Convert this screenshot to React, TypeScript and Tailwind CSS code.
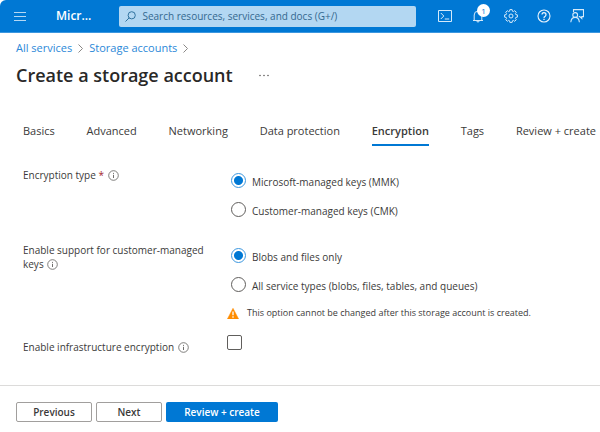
import React from "react";

const tabs = [
  "Basics",
  "Advanced",
  "Networking",
  "Data protection",
  "Encryption",
  "Tags",
  "Review + create",
];

function InfoIcon() {
  return (
    <svg
      className="ml-px inline-block size-[11px] align-[-2px]"
      viewBox="0 0 11 11"
      fill="none"
      stroke="#605e5c"
      aria-hidden="true"
    >
      <circle cx="5.5" cy="5.5" r="4.8" strokeWidth="0.8" />
      <path d="M5.5 4.8v3.2M5.5 2.9v1" strokeWidth="0.9" />
    </svg>
  );
}

function Chevron() {
  return (
    <svg
      className="h-[9px] w-[5px]"
      viewBox="0 0 5 9"
      fill="none"
      stroke="#8a8886"
      aria-hidden="true"
    >
      <path d="M0.5 0.5l4 4-4 4" />
    </svg>
  );
}

interface RadioProps {
  name: string;
  label: string;
  checked: boolean;
  onSelect: () => void;
}

function Radio({ name, label, checked, onSelect }: RadioProps) {
  return (
    <label className="flex h-[15px] items-center gap-[6px]">
      <input
        type="radio"
        name={name}
        checked={checked}
        onChange={onSelect}
        className="size-[15px] shrink-0 appearance-none rounded-full border border-[#605e5c] bg-white checked:border-[#3c97df] checked:bg-[radial-gradient(circle,#0078d4_4px,white_5px)]"
      />
      <span className="pt-[3px]">{label}</span>
    </label>
  );
}

function TopBar() {
  return (
    <header className="flex h-[33px] items-center rounded-tl-md border-b border-[#3c97df] bg-[#0078d4] pr-4 pl-[14px] text-white">
      <button aria-label="Show portal menu">
        <svg
          className="h-[9px] w-3"
          viewBox="0 0 12 9"
          stroke="#b5d8f4"
          aria-hidden="true"
        >
          <path d="M0 0.5h12M0 4.5h12M0 8.5h12" />
        </svg>
      </button>
      <a href="#" className="ml-[30px] text-xs font-semibold">
        Micr...
      </a>
      <div className="ml-7 flex h-[21px] flex-1 items-center gap-[6px] rounded-[2px] bg-[#b3d7f2] pl-[6px]">
        <svg
          className="size-[11px] shrink-0"
          viewBox="0 0 11 11"
          fill="none"
          stroke="#31739f"
          aria-hidden="true"
        >
          <circle cx="6.7" cy="4.3" r="3.6" />
          <path d="M4.2 6.8L0.5 10.5" />
        </svg>
        <input
          type="text"
          aria-label="Search"
          placeholder="Search resources, services, and docs (G+/)"
          className="min-w-0 flex-1 bg-transparent text-[10px] outline-none placeholder:text-[#34688f]"
        />
      </div>
      <div className="ml-[22px] flex items-center gap-[19px]">
        <button aria-label="Cloud Shell">
          <svg
            className="size-[14px]"
            viewBox="0 0 14 14"
            fill="none"
            stroke="#d5eafa"
            aria-hidden="true"
          >
            <path d="M0.5 1.5h13v11h-13zM2.8 4l3 3-3 3M6.8 10h4.4" />
          </svg>
        </button>
        <button aria-label="Notifications" className="relative">
          <svg
            className="size-[14px]"
            viewBox="0 0 14 14"
            fill="none"
            stroke="#d5eafa"
            aria-hidden="true"
          >
            <path d="M2 11.5h10M3.2 11.5V6a3.8 3.8 0 0 1 7.6 0v5.5M5.7 11.7a1.3 1.3 0 0 0 2.6 0" />
          </svg>
          <span className="absolute -top-[5px] left-[6px] flex size-[13px] items-center justify-center rounded-full bg-white text-[8px] text-[#0078d4]">
            1
          </span>
        </button>
        <button aria-label="Settings">
          <svg
            className="size-[14px]"
            viewBox="0 0 14 14"
            fill="none"
            stroke="#d5eafa"
            strokeLinejoin="round"
            aria-hidden="true"
          >
            <path d="M5.6 2.2L5.87 0.6H8.13L8.4 2.2L9.4 2.62L10.73 1.68L12.32 3.27L11.38 4.6L11.8 5.6L13.4 5.87V8.13L11.8 8.4L11.38 9.4L12.32 10.73L10.73 12.32L9.4 11.38L8.4 11.8L8.13 13.4H5.87L5.6 11.8L4.6 11.38L3.27 12.32L1.68 10.73L2.62 9.4L2.2 8.4L0.6 8.13V5.87L2.2 5.6L2.62 4.6L1.68 3.27L3.27 1.68L4.6 2.62z" />
            <circle cx="7" cy="7" r="2" />
          </svg>
        </button>
        <button aria-label="Help">
          <svg
            className="size-[14px]"
            viewBox="0 0 14 14"
            fill="none"
            stroke="#e6f2fc"
            strokeWidth="1.1"
            aria-hidden="true"
          >
            <circle cx="7" cy="7" r="6" />
            <path
              d="M5 5.6a2 2 0 1 1 3.2 1.6C7.4 7.7 7 8 7 8.9M7 9.8v1.2"
              strokeWidth="1.3"
            />
          </svg>
        </button>
        <button aria-label="Feedback">
          <svg
            className="size-[14px]"
            viewBox="0 0 14 14"
            fill="none"
            stroke="#d5eafa"
            strokeWidth="1.1"
            aria-hidden="true"
          >
            <path d="M3.5 3V0.6h10v7h-1.7v1.9L9.8 7.6H8.8" />
            <circle cx="5.2" cy="6" r="2.4" />
            <path d="M0.8 13.3c0.3-3 2-4.9 4.4-4.9s3.9 1.9 4.2 4.9" />
          </svg>
        </button>
      </div>
    </header>
  );
}

export default function App() {
  const [activeTab, setActiveTab] = React.useState("Encryption");
  const [keyType, setKeyType] = React.useState("mmk");
  const [support, setSupport] = React.useState("blobs");

  return (
    <main className="bg-white font-['Open_Sans','Noto_Sans',sans-serif] text-[11px] leading-[14px] text-[#3b3a39]">
      <TopBar />

      <nav
        aria-label="Breadcrumb"
        className="flex items-center gap-[6px] px-4 pt-2 text-[#2b88d8]"
      >
        <a href="#">All services</a>
        <Chevron />
        <a href="#">Storage accounts</a>
        <Chevron />
      </nav>

      <div className="flex items-center gap-[26px] px-4 pt-2">
        <h1 className="text-lg leading-6 font-semibold text-[#292827]">
          Create a storage account
        </h1>
        <button aria-label="More actions">
          <svg
            className="h-[3px] w-[10px]"
            viewBox="0 0 10 3"
            fill="#605e5c"
            aria-hidden="true"
          >
            <circle cx="1" cy="1.5" r="0.8" />
            <circle cx="5" cy="1.5" r="0.8" />
            <circle cx="9" cy="1.5" r="0.8" />
          </svg>
        </button>
      </div>

      <div
        role="tablist"
        className="mt-[37px] flex justify-between pr-1 pl-[23px] whitespace-nowrap"
      >
        {tabs.map((tab) => (
          <button
            key={tab}
            role="tab"
            aria-selected={tab === activeTab}
            onClick={() => setActiveTab(tab)}
            className={
              tab === activeTab
                ? "border-b-2 border-[#0078d4] pb-[6px] font-semibold"
                : "border-b-2 border-transparent pb-[6px]"
            }
          >
            {tab}
          </button>
        ))}
      </div>

      <div className="grid grid-cols-[204px_1fr] pl-[23px] text-[10px]">
        <div id="key-type" className="pt-[22px]">
          Encryption type <span className="text-[#a4262c]">*</span> <InfoIcon />
        </div>
        <div
          role="radiogroup"
          aria-labelledby="key-type"
          className="flex flex-col gap-[14px] pt-[27px] pl-1"
        >
          <Radio
            name="keyType"
            label="Microsoft-managed keys (MMK)"
            checked={keyType === "mmk"}
            onSelect={() => setKeyType("mmk")}
          />
          <Radio
            name="keyType"
            label="Customer-managed keys (CMK)"
            checked={keyType === "cmk"}
            onSelect={() => setKeyType("cmk")}
          />
        </div>

        <div id="support" className="pt-[26px] pr-4">
          Enable support for customer-managed keys <InfoIcon />
        </div>
        <div>
          <div
            role="radiogroup"
            aria-labelledby="support"
            className="flex flex-col gap-[14px] pt-[31px] pl-1"
          >
            <Radio
              name="support"
              label="Blobs and files only"
              checked={support === "blobs"}
              onSelect={() => setSupport("blobs")}
            />
            <Radio
              name="support"
              label="All service types (blobs, files, tables, and queues)"
              checked={support === "all"}
              onSelect={() => setSupport("all")}
            />
          </div>
          <p className="flex items-center gap-2 pt-[14px] text-[9px]">
            <svg
              className="h-[11px] w-[12px] shrink-0"
              viewBox="0 0 12 11"
              aria-hidden="true"
            >
              <path
                d="M6 0.3L11.6 11H0.4z"
                fill="#ff8c00"
                stroke="#ff8c00"
                strokeWidth="0.5"
                strokeLinejoin="round"
              />
              <path d="M6 3.5v3.8M6 8.3v1.4" stroke="#fff" strokeWidth="1.3" />
            </svg>
            This option cannot be changed after this storage account is created.
          </p>
        </div>

        <label htmlFor="infra" className="pt-5">
          Enable infrastructure encryption <InfoIcon />
        </label>
        <div className="flex pt-[15px]">
          <input
            id="infra"
            type="checkbox"
            className="size-[15px] appearance-none rounded-[2px] border border-[#605e5c] checked:bg-[#0078d4]"
          />
        </div>
      </div>

      <footer className="mt-[31px] flex gap-1 border-t border-[#dcdbda] px-4 pt-4 pb-[10px] text-[10px] font-semibold">
        <button className="h-5 w-[76px] rounded-[2px] border border-[#a19f9d]">
          Previous
        </button>
        <button className="h-5 w-[66px] rounded-[2px] border border-[#a19f9d]">
          Next
        </button>
        <button className="h-5 w-28 rounded-[2px] bg-[#0078d4] text-white">
          Review + create
        </button>
      </footer>
    </main>
  );
}
